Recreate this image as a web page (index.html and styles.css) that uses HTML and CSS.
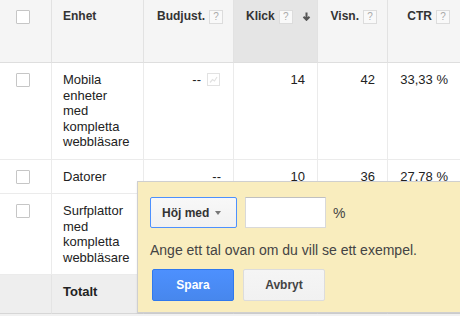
FILE: index.html
```html
<!DOCTYPE html>
<html lang="sv">
<head>
  <meta charset="UTF-8">
  <title>Enheter</title>
  <link rel="stylesheet" href="styles.css">
</head>
<body>
  <div class="wrap">
    <table class="grid">
      <thead>
        <tr>
          <th class="c-check"><span class="box"></span></th>
          <th class="c-name left">Enhet</th>
          <th class="c-bid"><span class="hd">Budjust.<span class="help">?</span></span></th>
          <th class="c-clicks sorted"><span class="hd">Klick<span class="help">?</span><svg class="sort" width="9" height="9" viewBox="0 0 9 9"><path d="M4.5 0.5V8M1.5 4.8L4.5 7.8L7.5 4.8" fill="none" stroke="#555" stroke-width="2"/></svg></span></th>
          <th class="c-impr"><span class="hd">Visn.<span class="help">?</span></span></th>
          <th class="c-ctr"><span class="hd">CTR<span class="help">?</span></span></th>
        </tr>
      </thead>
      <tbody>
        <tr>
          <td><span class="box"></span></td>
          <td class="left">Mobila enheter med kompletta webbläsare</td>
          <td><span class="bid">--<svg class="trend" width="13" height="13" viewBox="0 0 13 13"><rect x="0.5" y="0.5" width="12" height="12" fill="#fff" stroke="#e2e2e2"/><path d="M3 9.5L5.5 6.5L7.5 8L10 4" fill="none" stroke="#e2e2e2" stroke-width="1.2"/></svg></span></td>
          <td>14</td>
          <td>42</td>
          <td>33,33 %</td>
        </tr>
        <tr>
          <td><span class="box"></span></td>
          <td class="left">Datorer</td>
          <td>--</td>
          <td>10</td>
          <td>36</td>
          <td>27,78 %</td>
        </tr>
        <tr>
          <td><span class="box"></span></td>
          <td class="left">Surfplattor med kompletta webbläsare</td>
          <td></td>
          <td></td>
          <td></td>
          <td></td>
        </tr>
      </tbody>
      <tfoot>
        <tr class="total">
          <td></td>
          <td class="left">Totalt</td>
          <td></td>
          <td></td>
          <td></td>
          <td></td>
        </tr>
      </tfoot>
    </table>

    <div class="bubble">
      <div class="line">
        <button class="drop">Höj med<span class="caret"></span></button>
        <input type="text" class="pct">
        <span class="unit">%</span>
      </div>
      <p class="hint">Ange ett tal ovan om du vill se ett exempel.</p>
      <div class="actions">
        <button class="btn primary">Spara</button>
        <button class="btn">Avbryt</button>
      </div>
    </div>
  </div>
</body>
</html>
```

FILE: styles.css
```css
html, body { margin: 0; overflow: hidden; }
body { background-color: #f1f1f1; font-family: "Liberation Sans", Arial, sans-serif; color: #222; }
.wrap { position: relative; width: 460px; }

/* tabell */
.grid { width: 460px; table-layout: fixed; border-collapse: separate; border-spacing: 0; background-color: #fff; font-size: 13px; line-height: 15.5px; }
.grid th, .grid td { box-sizing: border-box; border-right: 1px solid #ebebeb; border-bottom: 1px solid #ebebeb; padding: 9px 12px; text-align: right; vertical-align: top; }
.grid th:last-child, .grid td:last-child { border-right: none; }
.grid .left { text-align: left; padding-left: 11px; }
.c-check { width: 52px; }
.c-name { width: 92px; }
.c-bid { width: 90px; }
.c-clicks { width: 84px; }
.c-impr { width: 70px; }
.c-ctr { width: 72px; }

.grid th { height: 63px; background-color: #f5f5f5; font-size: 12px; font-weight: bold; color: #333; white-space: nowrap; border-right-color: #e2e2e2; border-bottom-color: #dedede; padding-right: 10px; }
.grid th.sorted { background-color: #e5e5e5; padding-right: 8px; }
.grid th:first-child, .grid td:first-child { padding-left: 16px; }
.hd { display: inline-flex; align-items: center; gap: 4px; }
.help { display: inline-block; box-sizing: border-box; width: 14px; height: 14px; border: 1px solid #dcdcdc; background-color: #f9f9f9; color: #aaa; font-size: 10px; font-weight: normal; line-height: 12px; text-align: center; }
.sort { margin-left: 5px; }

.box { display: block; box-sizing: border-box; width: 14px; height: 14px; margin-top: 1px; border: 1px solid #c6c6c6; border-radius: 1px; background-color: #fff; }
.bid { display: inline-flex; align-items: flex-start; gap: 6px; margin-right: 1px; }
.trend { margin-top: 1px; }

.total td { background-color: #eeeeee; border-right-color: #e4e4e4; border-bottom-color: #d6d6d6; font-weight: bold; height: 39px; }

/* rutan */
.bubble { position: absolute; left: 137px; top: 181px; width: 340px; box-sizing: border-box; padding: 15px 12px 11px; background-color: #f9edbe; border: 1px solid #cfcfcf; box-shadow: 0 1px 2px rgba(0,0,0,0.08); font-size: 14px; color: #444; }
.line { display: flex; align-items: center; }
.drop { display: flex; align-items: center; gap: 6px; box-sizing: border-box; width: 87px; height: 31px; padding: 0 11px; border: 1px solid #4d90fe; border-radius: 2px; background: linear-gradient(#f8f8f8, #f1f1f1); font-family: inherit; font-size: 12px; font-weight: bold; color: #333; }
.caret { width: 0; height: 0; border-left: 3.5px solid transparent; border-right: 3.5px solid transparent; border-top: 4px solid #777; }
.pct { box-sizing: border-box; width: 81px; height: 31px; margin: 0 0 0 8px; border: 1px solid #d9d9d9; border-top-color: #c0c0c0; background-color: #fff; }
.unit { margin-left: 7px; }
.hint { margin: 14px 0 11px; line-height: 16px; }
.actions { display: flex; gap: 9px; margin-left: 2px; }
.btn { box-sizing: border-box; width: 82px; height: 32px; border: 1px solid #dcdcdc; border-radius: 2px; background: linear-gradient(#f5f5f5, #f1f1f1); font-family: inherit; font-size: 12px; font-weight: bold; color: #444; }
.btn.primary { border-color: #3079ed; background: linear-gradient(#4d90fe, #4787ed); color: #fff; }
```
